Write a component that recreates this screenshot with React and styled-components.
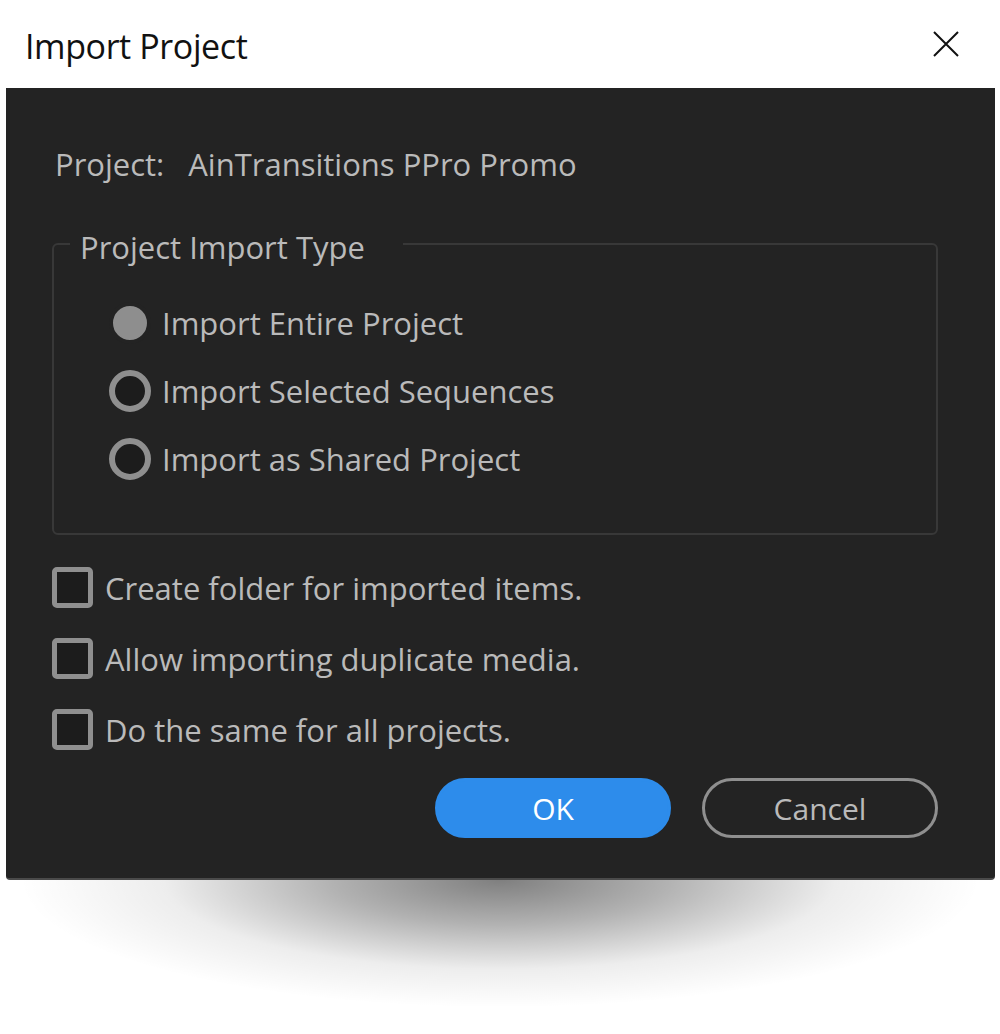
import React from 'react';
import styled, { createGlobalStyle } from 'styled-components';

const GlobalStyle = createGlobalStyle`
  html, body {
    margin: 0;
    background: #ffffff;
  }
  body {
    font-family: "Open Sans", "Noto Sans", sans-serif;
  }
`;

const TitleBar = styled.header`
  height: 88px;
  display: flex;
  align-items: center;
  justify-content: space-between;
  padding: 0 40px 0 25px;
  background: #ffffff;
`;

const Title = styled.h1`
  margin: 4px 0 0;
  font-size: 34px;
  font-weight: 400;
  color: #111111;
  letter-spacing: -0.4px;
`;

const CloseButton = styled.button`
  width: 28px;
  height: 28px;
  padding: 0;
  border: 0;
  background: none;
  display: flex;
  align-items: center;
  justify-content: center;
`;

const Panel = styled.main`
  margin: 0 5px 0 6px;
  height: 792px;
  box-sizing: border-box;
  background: #232323;
  border-radius: 0 0 4px 4px;
  border-bottom: 2px solid #4a4a4a;
  padding: 48px 57px 0 46px;
  color: #bababa;
  font-size: 31px;
`;

const ProjectLine = styled.div`
  display: flex;
  gap: 24px;
  padding-left: 3px;
  height: 56px;
  align-items: center;
`;

const Fieldset = styled.fieldset`
  margin: 28px 0 0;
  height: 315px;
  box-sizing: border-box;
  border: 2px solid #383838;
  border-radius: 6px;
  padding: 0;
`;

const Legend = styled.legend`
  padding: 6px 38px 0 10px;
  margin-left: 16px;
  font-size: 31px;
  color: #bababa;
`;

const RadioList = styled.div`
  display: flex;
  flex-direction: column;
  padding: 21px 0 0 55px;
`;

const Row = styled.label`
  display: flex;
  align-items: center;
  gap: ${({ $gap }) => $gap}px;
  height: ${({ $h }) => $h}px;
`;

const Radio = styled.span`
  width: 42px;
  height: 42px;
  box-sizing: border-box;
  border-radius: 50%;
  flex: none;
  border: ${({ $checked }) => ($checked ? '4px solid #232323' : '6px solid #8f8f8f')};
  background: ${({ $checked }) => ($checked ? '#8e8e8e' : '#1c1c1c')};
`;

const Options = styled.div`
  display: flex;
  flex-direction: column;
  margin-top: 17px;
`;

const Checkbox = styled.span`
  width: 41px;
  height: 41px;
  box-sizing: border-box;
  flex: none;
  border: 5px solid #8f8f8f;
  border-radius: 5px;
  background: #1c1c1c;
`;

const Footer = styled.div`
  display: flex;
  justify-content: flex-end;
  gap: 31px;
  margin-top: 13px;
`;

const Button = styled.button`
  width: 236px;
  height: 60px;
  box-sizing: border-box;
  border-radius: 30px;
  font-family: inherit;
  font-size: 30px;
  padding: 0;
  border: 3px solid ${({ $primary }) => ($primary ? '#2d8ceb' : '#8f8f8f')};
  background: ${({ $primary }) => ($primary ? '#2d8ceb' : 'transparent')};
  color: ${({ $primary }) => ($primary ? '#ffffff' : '#bababa')};
`;

const Shadow = styled.div`
  margin: 0 20px;
  height: 150px;
  background: radial-gradient(
    ellipse 50% 85% at 50% 0%,
    rgba(0, 0, 0, 0.5) 0%,
    rgba(0, 0, 0, 0.3) 35%,
    rgba(0, 0, 0, 0.07) 70%,
    rgba(0, 0, 0, 0) 100%
  );
`;

const radios = [
  { label: 'Import Entire Project', checked: true },
  { label: 'Import Selected Sequences', checked: false },
  { label: 'Import as Shared Project', checked: false },
];

const checks = [
  'Create folder for imported items.',
  'Allow importing duplicate media.',
  'Do the same for all projects.',
];

const App = () => (
  <>
    <GlobalStyle />
    <TitleBar>
      <Title>Import Project</Title>
      <CloseButton aria-label="Close">
        <svg width="26" height="26" viewBox="0 0 26 26">
          <path d="M1 1 L25 25 M25 1 L1 25" stroke="#111" strokeWidth="2" />
        </svg>
      </CloseButton>
    </TitleBar>
    <Panel>
      <ProjectLine>
        <span>Project:</span>
        <span>AinTransitions PPro Promo</span>
      </ProjectLine>
      <Fieldset>
        <Legend>Project Import Type</Legend>
        <RadioList>
          {radios.map((r) => (
            <Row key={r.label} $gap={11} $h={68}>
              <Radio $checked={r.checked} />
              <span>{r.label}</span>
            </Row>
          ))}
        </RadioList>
      </Fieldset>
      <Options>
        {checks.map((c) => (
          <Row key={c} $gap={12} $h={71}>
            <Checkbox />
            <span>{c}</span>
          </Row>
        ))}
      </Options>
      <Footer>
        <Button $primary>OK</Button>
        <Button>Cancel</Button>
      </Footer>
    </Panel>
    <Shadow />
  </>
);

export default App;
